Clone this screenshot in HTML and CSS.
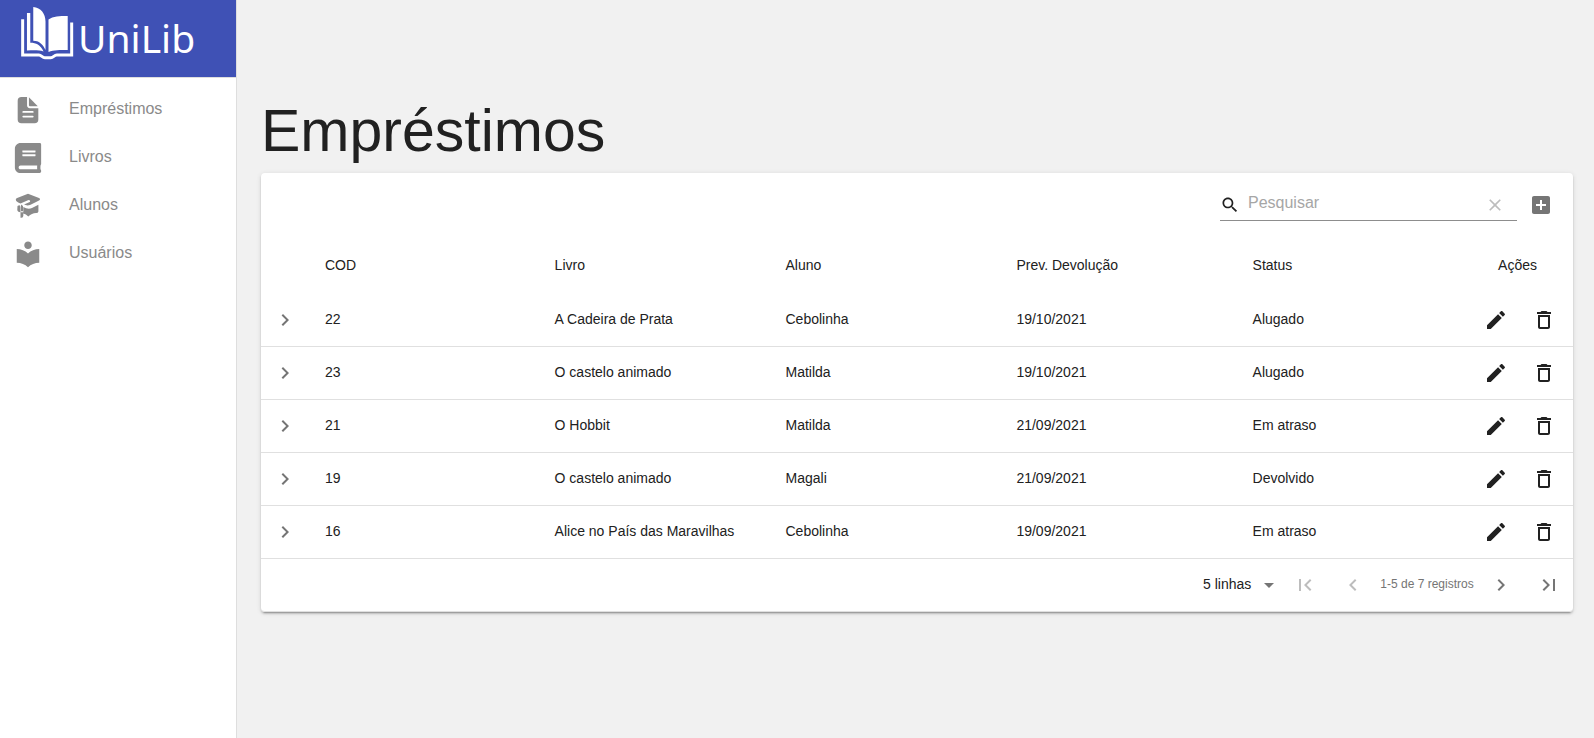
FILE: index.html
```html
<!DOCTYPE html>
<html lang="pt-BR">
<head>
<meta charset="utf-8">
<title>UniLib - Empréstimos</title>
<link rel="stylesheet" href="styles.css">
</head>
<body>
<svg class="sprite" aria-hidden="true">
  <symbol id="chevron-right" viewBox="0 0 24 24"><path d="M10 6L8.590 7.410 13.170 12l-4.580 4.590L10 18l6-6z"/></symbol>
  <symbol id="chevron-left" viewBox="0 0 24 24"><path d="M15.410 7.410L14 6l-6 6 6 6 1.410-1.410L10.830 12z"/></symbol>
  <symbol id="first" viewBox="0 0 24 24"><path d="M18.410 16.590L13.820 12l4.590-4.590L17 6l-6 6 6 6zM6 6h2v12H6z"/></symbol>
  <symbol id="last" viewBox="0 0 24 24"><path d="M5.590 7.410L10.180 12l-4.590 4.590L7 18l6-6-6-6zM16 6h2v12h-2z"/></symbol>
  <symbol id="edit" viewBox="0 0 24 24"><path d="M3 17.250V21h3.750L17.810 9.940l-3.750-3.750L3 17.250zM20.710 7.040c.39-.39.39-1.020 0-1.410l-2.340-2.340c-.39-.39-1.020-.39-1.410 0l-1.830 1.830 3.750 3.750 1.830-1.830z"/></symbol>
  <symbol id="trash" viewBox="0 0 24 24"><path d="M6 19c0 1.100.9 2 2 2h8c1.100 0 2-.9 2-2V7H6v12zM8 9h8v10H8V9zm7.500-5l-1-1h-5l-1 1H5v2h14V4z"/></symbol>
</svg>
<div class="app">
  <aside class="sidebar">
    <div class="brand">
      <svg class="brand-icon" viewBox="0 0 160 160" aria-hidden="true">
        <path fill="none" stroke="#fff" stroke-width="9" d="M5 37V145H54C62 145 64 153 72 153H90C98 153 100 145 108 145H153V47"/>
        <path fill="#fff" d="M18 18H28V108C46 108 58 114 68 134C55 130 42 131 18 131ZM37 0C60 2 74 20 74 44V130C66 112 54 102 37 102ZM83 38C97 27 116 27 141 27V130C116 130 100 130 83 136Z"/>
      </svg>
      <span class="brand-name">UniLib</span>
    </div>
    <nav class="menu">
      <a class="menu-item" href="#emprestimos">
        <svg viewBox="0 0 512 512" aria-hidden="true"><path d="M428 224H288a48 48 0 01-48-48V36a4 4 0 00-4-4h-92a64 64 0 00-64 64v320a64 64 0 0064 64h224a64 64 0 0064-64V228a4 4 0 00-4-4zm-92 160H176a16 16 0 010-32h160a16 16 0 010 32zm0-80H176a16 16 0 010-32h160a16 16 0 010 32z"/><path d="M419.220 188.590L275.410 44.780a2 2 0 00-3.410 1.410V176a16 16 0 0016 16h129.810a2 2 0 001.410-3.410z"/></svg>
        <span>Empréstimos</span></a>
      <a class="menu-item" href="#livros">
        <svg viewBox="0 0 448 512" aria-hidden="true"><path d="M448 360V24c0-13.300-10.700-24-24-24H96C43 0 0 43 0 96v320c0 53 43 96 96 96h328c13.300 0 24-10.700 24-24v-16c0-7.500-3.500-14.300-8.900-18.700-4.200-15.400-4.200-59.300 0-74.700 5.400-4.300 8.900-11.100 8.900-18.600zM128 134c0-3.300 2.700-6 6-6h212c3.300 0 6 2.700 6 6v20c0 3.300-2.700 6-6 6H134c-3.300 0-6-2.700-6-6v-20zm0 64c0-3.300 2.700-6 6-6h212c3.300 0 6 2.700 6 6v20c0 3.300-2.700 6-6 6H134c-3.300 0-6-2.700-6-6v-20zm253.400 250H96c-17.700 0-32-14.300-32-32 0-17.600 14.400-32 32-32h285.400c-1.900 17.100-1.900 46.900 0 64z"/></svg>
        <span>Livros</span></a>
      <a class="menu-item" href="#alunos">
        <svg viewBox="0 0 30 30" aria-hidden="true"><path d="M15 2.700L26 6.900Q28 8 26 9.500L17 14Q14 15 11 13.600L16.800 10.900Q18 9.500 15.500 9L7.500 12.400Q5 11.600 3.200 9.900Q2.200 8.300 3.500 7.200ZM10.300 16Q15 18.800 19 17L25.400 13.800V20.500Q25 22 23.500 22Q19 21.800 15.300 25.500Q13 23 10.300 22.400ZM4.500 15Q7.500 12.800 7.500 16.500V21.300Q4.300 21.300 4.300 18.500ZM8 13.500L10 15V20.300H8ZM7.500 21.300H10.300V25Q9.700 27.200 7.500 26.800Z"/></svg>
        <span>Alunos</span></a>
      <a class="menu-item" href="#usuarios">
        <svg viewBox="0 0 24 24" aria-hidden="true"><path d="M12 11.550C9.640 9.350 6.480 8 3 8v11c3.480 0 6.640 1.350 9 3.550 2.360-2.190 5.520-3.550 9-3.550V8c-3.480 0-6.640 1.350-9 3.550zM12 8c1.660 0 3-1.340 3-3s-1.340-3-3-3-3 1.340-3 3 1.340 3 3 3z"/></svg>
        <span>Usuários</span></a>
    </nav>
  </aside>
  <main class="content">
    <h1>Empréstimos</h1>
    <section class="card">
      <div class="toolbar">
        <div class="search">
          <svg class="search-icon" viewBox="0 0 24 24" aria-hidden="true"><path d="M15.500 14h-.79l-.28-.27C15.410 12.590 16 11.110 16 9.500 16 5.910 13.090 3 9.500 3S3 5.910 3 9.500 5.910 16 9.500 16c1.610 0 3.090-.59 4.230-1.570l.27.28v.79l5 4.990L20.490 19l-4.990-5zm-6 0C7.010 14 5 11.990 5 9.500S7.010 5 9.500 5 14 7.010 14 9.500 11.990 14 9.500 14z"/></svg>
          <input type="text" placeholder="Pesquisar" aria-label="Pesquisar">
          <button class="clear" type="button" aria-label="Limpar"><svg viewBox="0 0 24 24"><path d="M19 6.410L17.590 5 12 10.590 6.410 5 5 6.410 10.590 12 5 17.590 6.410 19 12 13.410 17.590 19 19 17.590 13.410 12z"/></svg></button>
        </div>
        <button class="icon-button muted" type="button" aria-label="Adicionar"><svg viewBox="0 0 24 24"><path d="M19 3H5c-1.110 0-2 .9-2 2v14c0 1.100.89 2 2 2h14c1.100 0 2-.9 2-2V5c0-1.100-.9-2-2-2zm-2 10h-4v4h-2v-4H7v-2h4V7h2v4h4v2z"/></svg></button>
      </div>
      <table>
        <colgroup><col class="col-toggle"><col class="col-code"><col class="col-book"><col class="col-student"><col class="col-date"><col><col class="col-actions"></colgroup>
        <thead><tr><td></td><th scope="col">COD</th><th scope="col">Livro</th><th scope="col">Aluno</th><th scope="col">Prev. Devolução</th><th scope="col">Status</th><th scope="col" class="actions-title">Ações</th></tr></thead>
        <tbody>
          <tr><td class="toggle"><button class="icon-button muted" type="button" aria-label="Detalhes"><svg><use href="#chevron-right"/></svg></button></td><td>22</td><td>A Cadeira de Prata</td><td>Cebolinha</td><td>19/10/2021</td><td>Alugado</td><td class="actions"><div><button class="icon-button" type="button" aria-label="Editar"><svg><use href="#edit"/></svg></button><button class="icon-button" type="button" aria-label="Excluir"><svg><use href="#trash"/></svg></button></div></td></tr>
          <tr><td class="toggle"><button class="icon-button muted" type="button" aria-label="Detalhes"><svg><use href="#chevron-right"/></svg></button></td><td>23</td><td>O castelo animado</td><td>Matilda</td><td>19/10/2021</td><td>Alugado</td><td class="actions"><div><button class="icon-button" type="button" aria-label="Editar"><svg><use href="#edit"/></svg></button><button class="icon-button" type="button" aria-label="Excluir"><svg><use href="#trash"/></svg></button></div></td></tr>
          <tr><td class="toggle"><button class="icon-button muted" type="button" aria-label="Detalhes"><svg><use href="#chevron-right"/></svg></button></td><td>21</td><td>O Hobbit</td><td>Matilda</td><td>21/09/2021</td><td>Em atraso</td><td class="actions"><div><button class="icon-button" type="button" aria-label="Editar"><svg><use href="#edit"/></svg></button><button class="icon-button" type="button" aria-label="Excluir"><svg><use href="#trash"/></svg></button></div></td></tr>
          <tr><td class="toggle"><button class="icon-button muted" type="button" aria-label="Detalhes"><svg><use href="#chevron-right"/></svg></button></td><td>19</td><td>O castelo animado</td><td>Magali</td><td>21/09/2021</td><td>Devolvido</td><td class="actions"><div><button class="icon-button" type="button" aria-label="Editar"><svg><use href="#edit"/></svg></button><button class="icon-button" type="button" aria-label="Excluir"><svg><use href="#trash"/></svg></button></div></td></tr>
          <tr><td class="toggle"><button class="icon-button muted" type="button" aria-label="Detalhes"><svg><use href="#chevron-right"/></svg></button></td><td>16</td><td>Alice no País das Maravilhas</td><td>Cebolinha</td><td>19/09/2021</td><td>Em atraso</td><td class="actions"><div><button class="icon-button" type="button" aria-label="Editar"><svg><use href="#edit"/></svg></button><button class="icon-button" type="button" aria-label="Excluir"><svg><use href="#trash"/></svg></button></div></td></tr>
        </tbody>
      </table>
      <div class="pagination">
        <div class="rows-select">
          <select aria-label="Linhas por página"><option>5 linhas</option><option>10 linhas</option><option>20 linhas</option></select>
          <svg viewBox="0 0 24 24" aria-hidden="true"><path d="M7 10l5 5 5-5z"/></svg>
        </div>
        <button class="icon-button muted" type="button" disabled aria-label="Primeira página"><svg><use href="#first"/></svg></button>
        <button class="icon-button muted" type="button" disabled aria-label="Página anterior"><svg><use href="#chevron-left"/></svg></button>
        <span class="range">1-5 de 7 registros</span>
        <button class="icon-button muted" type="button" aria-label="Próxima página"><svg><use href="#chevron-right"/></svg></button>
        <button class="icon-button muted" type="button" aria-label="Última página"><svg><use href="#last"/></svg></button>
      </div>
    </section>
  </main>
</div>
</body>
</html>
```
FILE: styles.css
```css
* { box-sizing: border-box; }

body {
  margin: 0;
  background: #f1f1f1;
  color: #212121;
  font-family: "Liberation Sans", Arial, sans-serif;
  font-size: 14px;
}

button, input, select { font: inherit; color: inherit; border: 0; background: none; padding: 0; margin: 0; }
svg { display: block; fill: currentColor; }
.sprite { position: absolute; width: 0; height: 0; }

.app { display: flex; min-height: 100vh; }

.sidebar {
  flex: 0 0 237px;
  background: #fff;
  border-right: 1px solid #dedede;
}

.brand {
  display: flex;
  gap: 4px;
  height: 78px;
  padding: 7px 0 0 21px;
  background: #3f51b5;
  border-bottom: 1px solid #dedede;
  color: #fff;
}
.brand-icon { width: 53px; height: 53px; }
.brand-name { font-family: "Noto Sans", sans-serif; font-size: 39px; line-height: 62px; }

.menu { padding: 8px 0; }
.menu-item {
  display: flex;
  align-items: center;
  height: 48px;
  padding: 0 13px;
  color: #8a8a8a;
  font-size: 16px;
  text-decoration: none;
}
.menu-item svg { width: 30px; height: 30px; margin-right: 26px; }
.menu-item span { padding-bottom: 3px; }

.content { flex: 1; min-width: 0; padding: 95px 21px 24px 24px; }

h1 { margin: 0 0 6px; font-size: 59px; font-weight: 400; line-height: 72px; }

.card {
  background: #fff;
  border-radius: 4px;
  box-shadow: 0 3px 1px -2px rgba(0, 0, 0, .2), 0 2px 2px 0 rgba(0, 0, 0, .14), 0 1px 5px 0 rgba(0, 0, 0, .12);
}

.icon-button {
  display: flex;
  align-items: center;
  justify-content: center;
  width: 48px;
  height: 48px;
  cursor: pointer;
}
.icon-button svg { width: 24px; height: 24px; }
.muted { color: #757575; }
.icon-button:disabled { color: #bdbdbd; cursor: default; }

.toolbar { display: flex; align-items: center; justify-content: flex-end; height: 64px; padding-right: 8px; }
.search {
  display: flex;
  align-items: center;
  width: 297px;
  height: 32px;
  border-bottom: 1px solid #8d8d8d;
}
.search-icon { width: 20px; height: 20px; margin-right: 8px; }
.search input { flex: 1; min-width: 0; height: 24px; padding-bottom: 4px; font-size: 16px; outline: 0; }
.search input::placeholder { color: #a6a6a6; opacity: 1; }
.clear { display: flex; justify-content: center; width: 44px; color: #bdbdbd; }
.clear svg { width: 20px; height: 20px; }

table { width: 100%; table-layout: fixed; border-collapse: separate; border-spacing: 0; }
.col-toggle { width: 48px; }
.col-code { width: 17.5%; }
.col-book, .col-student { width: 17.6%; }
.col-date { width: 18%; }
.col-actions { width: 106px; }
th, td { padding: 0 16px 2px; text-align: left; font-weight: 400; }
thead tr { height: 57px; }
tbody tr { height: 53px; }
tbody td { border-bottom: 1px solid #e0e0e0; }
td.toggle, td.actions { padding: 0; }
td.actions > div { display: flex; justify-content: center; }
th.actions-title { padding-right: 36px; text-align: right; }

.pagination {
  display: flex;
  align-items: center;
  justify-content: flex-end;
  height: 53px;
  border-bottom: 1px solid #e0e0e0;
  border-radius: 0 0 4px 4px;
}
.rows-select { position: relative; width: 78px; }
.rows-select select { width: 100%; height: 32px; padding-bottom: 2px; appearance: none; outline: 0; }
.rows-select svg { position: absolute; top: 4px; right: 0; width: 24px; height: 24px; color: #757575; pointer-events: none; }
.range { width: 100px; padding-bottom: 2px; text-align: center; white-space: nowrap; font-size: 12px; color: #757575; }
```
